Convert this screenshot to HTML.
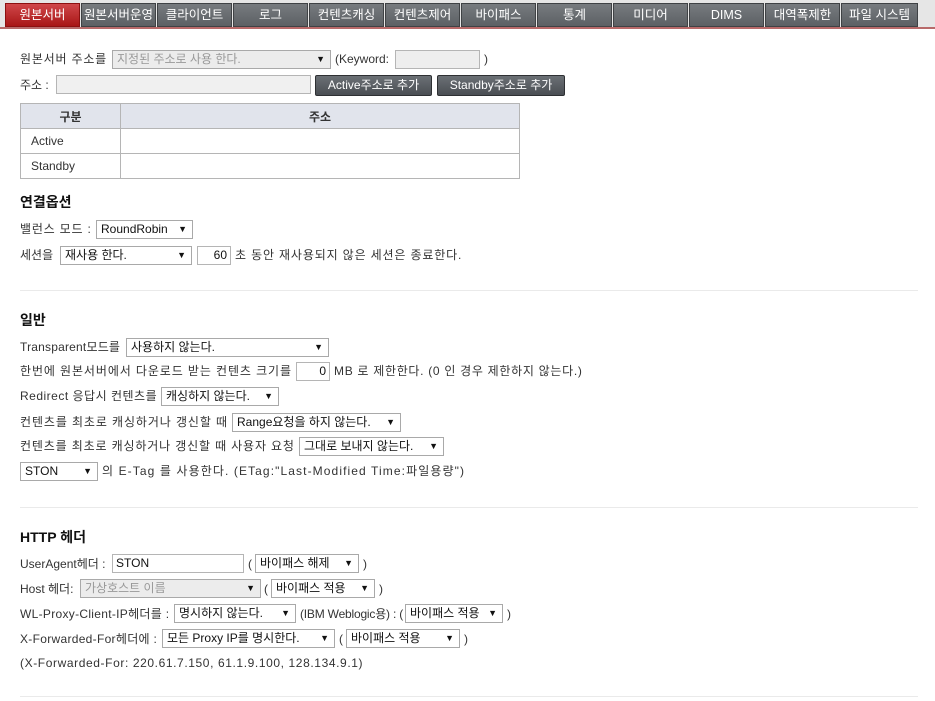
<!DOCTYPE html>
<html><head><meta charset="utf-8"><style>
*{margin:0;padding:0;box-sizing:border-box}
body{width:935px;height:701px;position:relative;background:#fff;font-family:"Liberation Sans","Noto Sans CJK KR","NanumGothic",sans-serif;font-size:12px;color:#333;overflow:hidden}
.t{position:absolute;line-height:18px;white-space:nowrap}
.tabbar{position:absolute;left:0;top:0;width:935px;height:28px;background:#e6e6e6}
.redline{position:absolute;left:0;top:27px;width:935px;height:2px;background:#b86a6a}
.tab{position:absolute;top:3px;height:24px;width:75px;background:linear-gradient(#777b7f,#5c6064);border:1px solid #3f4245;color:#fff;font-size:12.5px;text-align:center;line-height:22px}
.tab.on{background:linear-gradient(#d0474a,#a81616);border-color:#8c1010}
.sel{position:absolute;height:19px;border:1px solid #a9a9a9;background:#fff;color:#111;font-size:12px;line-height:17px;padding-left:4px;white-space:nowrap}
.sel:after{content:"▼";position:absolute;right:5px;top:0;font-size:9px;color:#111}
.sel.dis{background:#ececec;color:#999}
.inp{position:absolute;height:19px;border:1px solid #b5b5b5;background:#fff;font-size:12px;line-height:17px;padding:0 3px;color:#111}
.btn{position:absolute;height:21px;background:linear-gradient(#6b7075,#4a4e53);border:1px solid #2e3033;border-radius:2px;color:#fff;font-size:12px;line-height:19px;text-align:center}
h3{position:absolute;font-size:14px;font-weight:bold;color:#111}
.hr{position:absolute;left:20px;width:898px;height:1px;background:#eaeaea}
table{position:absolute;left:20px;top:103px;width:500px;border-collapse:collapse}
td,th{border:1px solid #b5b5b5;height:25px;font-size:12px}
th{background:#e1e4ec;font-weight:bold;color:#333}
td{padding-left:10px}
</style></head><body>
<div class="tabbar"></div>
<div class="redline"></div>
<div class="tab on" style="left:5px">원본서버</div>
<div class="tab" style="left:81px">원본서버운영</div>
<div class="tab" style="left:157px">클라이언트</div>
<div class="tab" style="left:233px">로그</div>
<div class="tab" style="left:309px">컨텐츠캐싱</div>
<div class="tab" style="left:385px">컨텐츠제어</div>
<div class="tab" style="left:461px">바이패스</div>
<div class="tab" style="left:537px">통계</div>
<div class="tab" style="left:613px">미디어</div>
<div class="tab" style="left:689px">DIMS</div>
<div class="tab" style="left:765px">대역폭제한</div>
<div class="tab" style="left:841px;width:77px">파일 시스템</div>

<div class="t" style="left:20px;top:50px;letter-spacing:0.8px">원본서버 주소를</div>
<div class="sel dis" style="left:112px;top:50px;width:219px">지정된 주소로 사용 한다.</div>
<div class="t" style="left:335px;top:50px">(Keyword:</div>
<div class="inp" style="left:395px;top:50px;width:85px;background:#eee"></div>
<div class="t" style="left:484px;top:50px">)</div>

<div class="t" style="left:20px;top:76px">주소 :</div>
<div class="inp" style="left:56px;top:75px;width:255px;background:#f0f0f0"></div>
<div class="btn" style="left:315px;top:75px;width:117px">Active주소로 추가</div>
<div class="btn" style="left:437px;top:75px;width:128px">Standby주소로 추가</div>

<table><tr><th style="width:100px">구분</th><th>주소</th></tr>
<tr><td>Active</td><td></td></tr><tr><td>Standby</td><td></td></tr></table>

<h3 style="left:20px;top:192px">연결옵션</h3>
<div class="t" style="left:20px;top:220px;letter-spacing:0.8px">밸런스 모드 :</div>
<div class="sel" style="left:96px;top:220px;width:97px">RoundRobin</div>
<div class="t" style="left:20px;top:246px">세션을</div>
<div class="sel" style="left:60px;top:246px;width:132px">재사용 한다.</div>
<div class="inp" style="left:197px;top:246px;width:34px;text-align:right">60</div>
<div class="t" style="left:235px;top:246px;letter-spacing:0.85px">초 동안 재사용되지 않은 세션은 종료한다.</div>

<div class="hr" style="top:290px"></div>
<h3 style="left:20px;top:310px">일반</h3>
<div class="t" style="left:20px;top:338px;letter-spacing:0.2px">Transparent모드를</div>
<div class="sel" style="left:126px;top:338px;width:203px">사용하지 않는다.</div>
<div class="t" style="left:20px;top:362px;letter-spacing:0.9px">한번에 원본서버에서 다운로드 받는 컨텐츠 크기를</div>
<div class="inp" style="left:296px;top:362px;width:34px;text-align:right">0</div>
<div class="t" style="left:334px;top:362px;letter-spacing:0.7px">MB 로 제한한다. (0 인 경우 제한하지 않는다.)</div>
<div class="t" style="left:20px;top:387px;letter-spacing:0.5px">Redirect 응답시 컨텐츠를</div>
<div class="sel" style="left:161px;top:387px;width:118px">캐싱하지 않는다.</div>
<div class="t" style="left:20px;top:413px;letter-spacing:0.9px">컨텐츠를 최초로 캐싱하거나 갱신할 때</div>
<div class="sel" style="left:232px;top:413px;width:169px">Range요청을 하지 않는다.</div>
<div class="t" style="left:20px;top:437px;letter-spacing:0.85px">컨텐츠를 최초로 캐싱하거나 갱신할 때 사용자 요청</div>
<div class="sel" style="left:299px;top:437px;width:145px">그대로 보내지 않는다.</div>
<div class="sel" style="left:20px;top:462px;width:78px">STON</div>
<div class="t" style="left:102px;top:462px;letter-spacing:1.1px">의 E-Tag 를 사용한다. (ETag:"Last-Modified Time:파일용량")</div>

<div class="hr" style="top:507px"></div>
<h3 style="left:20px;top:527px">HTTP 헤더</h3>
<div class="t" style="left:20px;top:555px">UserAgent헤더 :</div>
<div class="inp" style="left:112px;top:554px;width:132px">STON</div>
<div class="t" style="left:248px;top:555px">(</div>
<div class="sel" style="left:255px;top:554px;width:104px">바이패스 해제</div>
<div class="t" style="left:363px;top:555px">)</div>
<div class="t" style="left:20px;top:580px">Host 헤더:</div>
<div class="sel dis" style="left:80px;top:579px;width:181px">가상호스트 이름</div>
<div class="t" style="left:264px;top:580px">(</div>
<div class="sel" style="left:271px;top:579px;width:104px">바이패스 적용</div>
<div class="t" style="left:379px;top:580px">)</div>
<div class="t" style="left:20px;top:605px;letter-spacing:0.3px">WL-Proxy-Client-IP헤더를 :</div>
<div class="sel" style="left:174px;top:604px;width:122px">명시하지 않는다.</div>
<div class="t" style="left:300px;top:605px;letter-spacing:-0.2px">(IBM Weblogic용) : (</div>
<div class="sel" style="left:405px;top:604px;width:98px">바이패스 적용</div>
<div class="t" style="left:507px;top:605px">)</div>
<div class="t" style="left:20px;top:630px;letter-spacing:0.3px">X-Forwarded-For헤더에 :</div>
<div class="sel" style="left:162px;top:629px;width:173px">모든 Proxy IP를 명시한다.</div>
<div class="t" style="left:339px;top:630px">(</div>
<div class="sel" style="left:346px;top:629px;width:114px">바이패스 적용</div>
<div class="t" style="left:464px;top:630px">)</div>
<div class="t" style="left:20px;top:654px;letter-spacing:0.6px">(X-Forwarded-For: 220.61.7.150, 61.1.9.100, 128.134.9.1)</div>
<div class="hr" style="top:696px"></div>
</body></html>
